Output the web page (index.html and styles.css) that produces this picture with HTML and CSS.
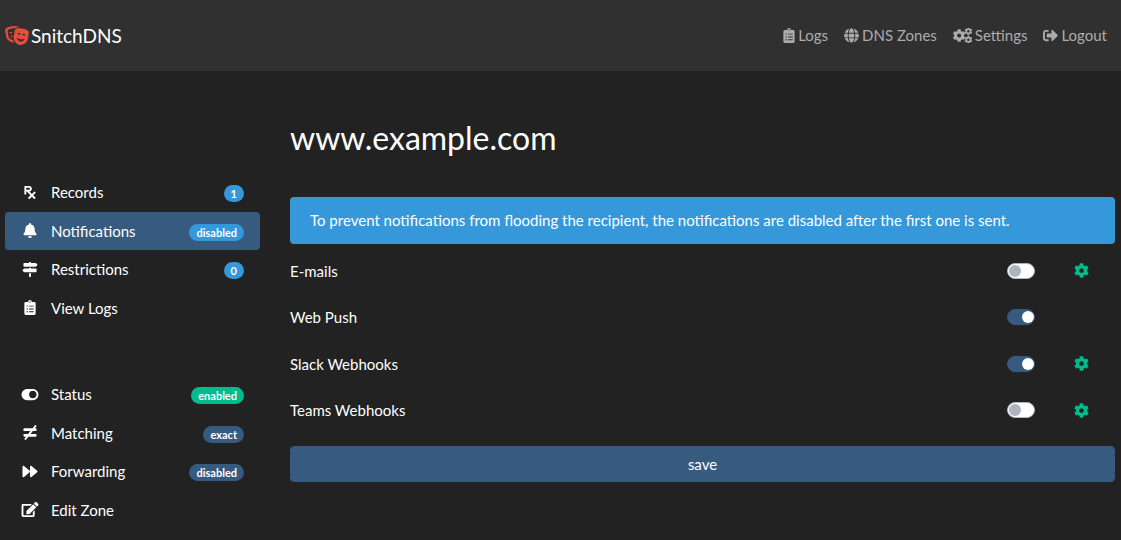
FILE: index.html
```html
<!DOCTYPE html>
<html lang="en">
<head>
<meta charset="utf-8">
<meta name="viewport" content="width=device-width, initial-scale=1">
<title>SnitchDNS</title>
<link rel="stylesheet" href="styles.css">
</head>
<body>
<svg class="sprite" aria-hidden="true">
  <symbol id="masks" viewBox="0 0 640 512"><path d="M206.86 245.15c-35.88 10.45-59.95 41.2-57.53 74.1 11.4-12.72 28.81-23.7 49.9-30.92l7.63-43.18zM95.81 295L64.08 115.49c-.29-1.62.28-2.62.24-2.65 57.76-32.06 123.12-49.01 189.01-49.01 1.61 0 3.23.17 4.85.19 13.95-13.47 31.73-22.83 51.59-26 18.89-3.02 38.05-4.55 57.18-5.32-9.99-13.95-24.48-24.23-41.77-27C301.27 1.89 277.24 0 253.32 0 176.66 0 101.02 19.42 33.2 57.06 9.03 70.48-3.92 98.48 1.05 126.58l31.73 179.51c14.23 80.52 136.33 142.08 204.45 142.08 3.59 0 6.75-.46 10.01-.8-13.52-17.08-28.94-40.48-39.5-67.58-47.61-12.98-106.06-51.62-111.93-84.79zm97.55-137.46c-.73-4.12-2.23-7.87-4.07-11.4-8.25 8.91-20.67 15.75-35.32 18.32-14.65 2.58-28.67.4-39.48-5.17-.52 3.94-.64 7.98.09 12.1 3.84 21.7 24.58 36.19 46.34 32.37 21.75-3.82 36.28-24.52 32.44-46.22zM606.8 120.9c-88.98-49.38-191.43-67.41-291.98-51.35-27.31 4.36-49.08 26.26-54.04 54.36l-31.73 179.51c-15.39 87.05 95.28 196.27 158.31 207.35 63.03 11.09 204.47-53.79 219.86-140.84l31.73-179.51c4.97-28.11-7.98-56.11-32.15-69.52zm-273.24 96.8c3.84-21.7 24.58-36.19 46.34-32.36 21.76 3.83 36.28 24.52 32.45 46.22-.73 4.12-2.23 7.87-4.07 11.4-8.25-8.91-20.67-15.75-35.32-18.32-14.65-2.58-28.67-.4-39.48 5.17-.53-3.95-.65-7.99.08-12.11zm70.47 198.76c-55.68-9.79-93.52-59.27-89.04-112.9 20.6 25.54 56.21 46.17 99.49 53.78 43.28 7.61 83.82.37 111.93-16.6-14.18 51.94-66.71 85.51-122.38 75.72zm130.3-151.34c-8.25-8.91-20.68-15.75-35.33-18.32-14.65-2.58-28.67-.4-39.48 5.17-.52-3.94-.64-7.98.09-12.1 3.84-21.7 24.58-36.19 46.34-32.37 21.75 3.83 36.28 24.52 32.45 46.22-.73 4.13-2.23 7.88-4.07 11.4z"/></symbol>
  <symbol id="clipboard" viewBox="0 0 384 512"><path d="M336 64h-80c0-35.3-28.7-64-64-64s-64 28.7-64 64H48C21.5 64 0 85.5 0 112v352c0 26.5 21.5 48 48 48h288c26.5 0 48-21.5 48-48V112c0-26.5-21.5-48-48-48zM96 424c-13.3 0-24-10.7-24-24s10.7-24 24-24 24 10.7 24 24-10.7 24-24 24zm0-96c-13.3 0-24-10.7-24-24s10.7-24 24-24 24 10.7 24 24-10.7 24-24 24zm0-96c-13.3 0-24-10.7-24-24s10.7-24 24-24 24 10.7 24 24-10.7 24-24 24zm96-192c13.3 0 24 10.7 24 24s-10.7 24-24 24-24-10.7-24-24 10.7-24 24-24zm128 368c0 4.4-3.6 8-8 8H168c-4.4 0-8-3.6-8-8v-16c0-4.4 3.6-8 8-8h144c4.4 0 8 3.6 8 8v16zm0-96c0 4.4-3.6 8-8 8H168c-4.4 0-8-3.6-8-8v-16c0-4.4 3.6-8 8-8h144c4.4 0 8 3.6 8 8v16zm0-96c0 4.4-3.6 8-8 8H168c-4.4 0-8-3.6-8-8v-16c0-4.4 3.6-8 8-8h144c4.4 0 8 3.6 8 8v16z"/></symbol>
  <symbol id="globe" viewBox="0 0 496 512"><path d="M336.5 160C322 70.7 287.8 8 248 8s-74 62.7-88.5 152h177zM152 256c0 22.2 1.2 43.5 3.3 64h185.3c2.1-20.5 3.3-41.8 3.3-64s-1.2-43.5-3.3-64H155.3c-2.1 20.5-3.3 41.8-3.3 64zm324.7-96c-28.6-67.9-86.5-120.4-158-141.6 24.4 33.8 41.2 84.7 50 141.6h108zM177.2 18.4C105.8 39.6 47.8 92.1 19.3 160h108c8.7-56.9 25.5-107.8 49.9-141.6zM487.4 192H372.7c2.1 21 3.3 42.5 3.3 64s-1.2 43-3.3 64h114.6c5.5-20.5 8.6-41.8 8.6-64s-3.1-43.5-8.5-64zM120 256c0-21.5 1.2-43 3.3-64H8.6C3.2 212.5 0 233.8 0 256s3.2 43.5 8.6 64h114.6c-2-21-3.2-42.5-3.2-64zm39.5 96c14.5 89.3 48.7 152 88.5 152s74-62.7 88.5-152h-177zm159.3 141.6c71.4-21.2 129.4-73.7 158-141.6h-108c-8.8 56.9-25.6 107.8-50 141.6zM19.3 352c28.6 67.9 86.5 120.4 158 141.6-24.4-33.8-41.2-84.7-50-141.6h-108z"/></symbol>
  <symbol id="cog" viewBox="0 0 512 512"><path id="cog-shape" d="M487.4 315.7l-42.6-24.6c4.3-23.2 4.3-47 0-70.2l42.6-24.6c4.9-2.8 7.1-8.6 5.5-14-11.1-35.6-30-67.8-54.7-94.6-3.8-4.1-10-5.1-14.8-2.3L380.8 110c-17.9-15.4-38.5-27.3-60.8-35.1V25.8c0-5.6-3.9-10.5-9.4-11.7-36.7-8.2-74.3-7.8-109.2 0-5.5 1.2-9.4 6.1-9.4 11.7V75c-22.2 7.9-42.8 19.8-60.8 35.1L88.7 85.5c-4.9-2.8-11-1.9-14.8 2.3-24.7 26.7-43.6 58.9-54.7 94.6-1.7 5.4.6 11.2 5.5 14L67.3 221c-4.3 23.2-4.3 47 0 70.2l-42.6 24.6c-4.9 2.8-7.1 8.6-5.5 14 11.1 35.6 30 67.8 54.7 94.6 3.8 4.1 10 5.1 14.8 2.3l42.6-24.6c17.9 15.4 38.5 27.3 60.8 35.1v49.2c0 5.6 3.9 10.5 9.4 11.7 36.7 8.2 74.3 7.8 109.2 0 5.5-1.2 9.4-6.1 9.4-11.7v-49.2c22.2-7.9 42.8-19.8 60.8-35.1l42.6 24.6c4.9 2.8 11 1.9 14.8-2.3 24.7-26.7 43.6-58.9 54.7-94.6 1.5-5.5-.7-11.3-5.6-14.1zM256 336c-44.1 0-80-35.9-80-80s35.9-80 80-80 80 35.9 80 80-35.9 80-80 80z"/></symbol>
  <symbol id="cogs" viewBox="0 0 640 512">
    <use href="#cog-shape" transform="translate(-18 34) scale(.87)"/>
    <use href="#cog-shape" transform="translate(384 -26) scale(.54)"/>
    <use href="#cog-shape" transform="translate(384 262) scale(.54)"/>
  </symbol>
  <symbol id="sign-out" viewBox="0 0 512 512"><path d="M497 273L329 441c-15 15-41 4.5-41-17v-96H152c-13.3 0-24-10.7-24-24v-96c0-13.3 10.7-24 24-24h136V88c0-21.4 25.9-32 41-17l168 168c9.3 9.4 9.3 24.6 0 34zM192 436v-40c0-6.6-5.4-12-12-12H96c-17.7 0-32-14.3-32-32V160c0-17.7 14.3-32 32-32h84c6.6 0 12-5.4 12-12V76c0-6.6-5.4-12-12-12H96c-53 0-96 43-96 96v192c0 53 43 96 96 96h84c6.6 0 12-5.4 12-12z"/></symbol>
  <symbol id="rx" viewBox="0 0 384 512"><path d="M301.26 352l78.06-78.06c6.25-6.25 6.25-16.38 0-22.63l-22.63-22.63c-6.25-6.25-16.38-6.25-22.63 0L256 306.74l-83.96-83.96C219.31 216.8 256 176.89 256 128c0-53.02-42.98-96-96-96H16C7.16 32 0 39.16 0 48v256c0 8.84 7.16 16 16 16h32c8.84 0 16-7.16 16-16v-80h18.75l128 128-78.06 78.06c-6.25 6.25-6.25 16.38 0 22.63l22.63 22.63c6.25 6.25 16.38 6.25 22.63 0L256 397.25l78.06 78.06c6.25 6.25 16.38 6.25 22.63 0l22.63-22.63c6.25-6.25 6.25-16.38 0-22.63L301.26 352zM64 96h96c17.64 0 32 14.36 32 32s-14.36 32-32 32H64V96z"/></symbol>
  <symbol id="bell" viewBox="0 0 448 512"><path d="M224 512c35.32 0 63.97-28.65 63.97-64H160.03c0 35.35 28.65 64 63.97 64zm215.39-149.71c-19.32-20.76-55.47-51.99-55.47-154.29 0-77.7-54.48-139.9-127.94-155.16V32c0-17.67-14.32-32-31.98-32s-31.98 14.33-31.98 32v20.84C118.56 68.1 64.08 130.3 64.08 208c0 102.3-36.15 133.53-55.47 154.29-6 6.45-8.66 14.16-8.61 21.71.11 16.4 12.98 32 32.1 32h383.8c19.12 0 32-15.6 32.1-32 .05-7.55-2.61-15.27-8.61-21.71z"/></symbol>
  <symbol id="signs" viewBox="0 0 512 512"><path d="M507.31 84.69L464 41.37c-6-6-14.14-9.37-22.63-9.37H288V16c0-8.84-7.16-16-16-16h-32c-8.84 0-16 7.16-16 16v16H56c-13.25 0-24 10.75-24 24v80c0 13.25 10.75 24 24 24h385.37c8.49 0 16.62-3.37 22.63-9.37l43.31-43.31c6.25-6.26 6.25-16.38 0-22.63zM224 496c0 8.84 7.16 16 16 16h32c8.84 0 16-7.16 16-16V384h-64v112zm232-272H288v-32h-64v32H70.63c-8.49 0-16.62 3.37-22.63 9.37L4.69 276.69c-6.25 6.25-6.25 16.38 0 22.63L48 342.63c6 6 14.14 9.37 22.63 9.37H456c13.25 0 24-10.75 24-24v-80c0-13.25-10.75-24-24-24z"/></symbol>
  <symbol id="toggle" viewBox="0 0 576 512"><path d="M384 64H192C86 64 0 150 0 256s86 192 192 192h192c106 0 192-86 192-192S490 64 384 64zm0 320c-70.8 0-128-57.3-128-128 0-70.8 57.3-128 128-128 70.8 0 128 57.3 128 128 0 70.8-57.3 128-128 128z"/></symbol>
  <symbol id="not-equal" viewBox="0 0 448 512"><path d="M416 208c17.67 0 32-14.33 32-32v-32c0-17.67-14.33-32-32-32h-23.88l51.87-66.81c5.37-7.02 4.04-17.06-2.97-22.43L415.61 3.3c-7.02-5.38-17.06-4.04-22.44 2.97L311.09 112H32c-17.67 0-32 14.33-32 32v32c0 17.67 14.33 32 32 32h204.56l-74.53 96H32c-17.67 0-32 14.33-32 32v32c0 17.67 14.33 32 32 32h55.49l-51.87 66.81c-5.37 7.01-4.04 17.05 2.97 22.43L64 508.7c7.02 5.38 17.06 4.04 22.43-2.97L168.52 400H416c17.67 0 32-14.33 32-32v-32c0-17.67-14.33-32-32-32H243.05l74.53-96H416z"/></symbol>
  <symbol id="forward" viewBox="0 0 512 512"><path d="M500.5 231.4l-192-160C287.9 54.3 256 68.6 256 96v320c0 27.4 31.9 41.8 52.5 24.6l192-160c15.3-12.8 15.3-36.4 0-49.2zm-256 0l-192-160C31.9 54.3 0 68.6 0 96v320c0 27.4 31.9 41.8 52.5 24.6l192-160c15.3-12.8 15.3-36.4 0-49.2z"/></symbol>
  <symbol id="edit" viewBox="0 0 576 512"><path d="M402.6 83.2l90.2 90.2c3.8 3.8 3.8 10 0 13.8L274.4 405.6l-92.8 10.3c-12.4 1.4-22.9-9.1-21.5-21.5l10.3-92.8L388.8 83.2c3.8-3.8 10-3.8 13.8 0zm162-22.9l-48.8-48.8c-15.2-15.2-39.9-15.2-55.2 0l-35.4 35.4c-3.8 3.8-3.8 10 0 13.8l90.2 90.2c3.8 3.8 10 3.8 13.8 0l35.4-35.4c15.2-15.3 15.2-40 0-55.2zM384 346.2V448H64V128h229.8c3.2 0 6.2-1.3 8.5-3.5l40-40c7.6-7.6 2.2-20.5-8.5-20.5H48C21.5 64 0 85.5 0 112v352c0 26.5 21.5 48 48 48h352c26.5 0 48-21.5 48-48V306.2c0-10.7-12.9-16-20.5-8.5l-40 40c-2.2 2.3-3.5 5.3-3.5 8.5z"/></symbol>
</svg>

<header class="navbar">
  <a class="brand" href="#"><svg class="brand-icon" aria-hidden="true"><use href="#masks"/></svg>SnitchDNS</a>
  <nav class="top-nav" aria-label="Main">
    <a class="top-link" href="#"><svg class="icon narrow" aria-hidden="true"><use href="#clipboard"/></svg>Logs</a>
    <a class="top-link" href="#"><svg class="icon" aria-hidden="true"><use href="#globe"/></svg>DNS Zones</a>
    <a class="top-link" href="#"><svg class="icon wide" aria-hidden="true"><use href="#cogs"/></svg>Settings</a>
    <a class="top-link" href="#"><svg class="icon" aria-hidden="true"><use href="#sign-out"/></svg>Logout</a>
  </nav>
</header>

<div class="layout">
  <aside class="sidebar">
    <nav class="side-nav" aria-label="Zone">
      <a class="side-link" href="#"><svg class="side-icon" aria-hidden="true"><use href="#rx"/></svg><span class="side-text">Records</span><span class="badge info">1</span></a>
      <a class="side-link active" href="#" aria-current="page"><svg class="side-icon" aria-hidden="true"><use href="#bell"/></svg><span class="side-text">Notifications</span><span class="badge info">disabled</span></a>
      <a class="side-link" href="#"><svg class="side-icon" aria-hidden="true"><use href="#signs"/></svg><span class="side-text">Restrictions</span><span class="badge info">0</span></a>
      <a class="side-link" href="#"><svg class="side-icon" aria-hidden="true"><use href="#clipboard"/></svg><span class="side-text">View Logs</span></a>
    </nav>
    <nav class="side-nav" aria-label="Zone settings">
      <a class="side-link" href="#"><svg class="side-icon" aria-hidden="true"><use href="#toggle"/></svg><span class="side-text">Status</span><span class="badge success">enabled</span></a>
      <a class="side-link" href="#"><svg class="side-icon" aria-hidden="true"><use href="#not-equal"/></svg><span class="side-text">Matching</span><span class="badge primary">exact</span></a>
      <a class="side-link" href="#"><svg class="side-icon" aria-hidden="true"><use href="#forward"/></svg><span class="side-text">Forwarding</span><span class="badge primary">disabled</span></a>
      <a class="side-link" href="#"><svg class="side-icon" aria-hidden="true"><use href="#edit"/></svg><span class="side-text">Edit Zone</span></a>
    </nav>
  </aside>

  <main class="content">
    <h1 class="title">www.example.com</h1>
    <div class="alert" role="status">To prevent notifications from flooding the recipient, the notifications are disabled after the first one is sent.</div>
    <form class="settings">
      <div class="row">
        <label class="row-label" for="email">E-mails</label>
        <input class="switch" type="checkbox" role="switch" id="email">
        <a class="gear" href="#" aria-label="E-mail settings"><svg class="icon" aria-hidden="true"><use href="#cog"/></svg></a>
      </div>
      <div class="row">
        <label class="row-label" for="push">Web Push</label>
        <input class="switch" type="checkbox" role="switch" id="push" checked>
      </div>
      <div class="row">
        <label class="row-label" for="slack">Slack Webhooks</label>
        <input class="switch" type="checkbox" role="switch" id="slack" checked>
        <a class="gear" href="#" aria-label="Slack settings"><svg class="icon" aria-hidden="true"><use href="#cog"/></svg></a>
      </div>
      <div class="row">
        <label class="row-label" for="teams">Teams Webhooks</label>
        <input class="switch" type="checkbox" role="switch" id="teams">
        <a class="gear" href="#" aria-label="Teams settings"><svg class="icon" aria-hidden="true"><use href="#cog"/></svg></a>
      </div>
      <button class="save" type="submit">save</button>
    </form>
  </main>
</div>
</body>
</html>
```

FILE: styles.css
```css
* {
  box-sizing: border-box;
}

body {
  margin: 0;
  background: #222;
  color: #fff;
  font-family: Lato, "Liberation Sans", sans-serif;
  font-size: 15px;
  line-height: 1.5;
}

a {
  color: inherit;
  text-decoration: none;
}

svg {
  display: block;
  flex: none;
  fill: currentColor;
}

.sprite {
  position: absolute;
  width: 0;
  height: 0;
}

.icon {
  width: 15px;
  height: 15px;
}

.icon.narrow {
  width: 12px;
}

.icon.wide {
  width: 19px;
}

/* Top bar */

.navbar {
  display: flex;
  align-items: center;
  justify-content: space-between;
  padding: 16px 14px 16px 5px;
  background: #303030;
}

.brand {
  display: flex;
  align-items: center;
  gap: 2px;
  font-size: 19px;
  line-height: 39px;
}

.brand-icon {
  width: 24px;
  height: 19px;
  color: #e74c3c;
}

.top-nav {
  display: flex;
  gap: 16px;
  color: #acacac;
}

.top-link {
  display: flex;
  align-items: center;
  gap: 3px;
}

/* Page columns */

.layout {
  display: grid;
  grid-template-columns: 255px minmax(0, 1fr);
  gap: 30px;
  padding: 48px 6px 12px 5px;
}

.sidebar {
  display: flex;
  flex-direction: column;
  gap: 48px;
  padding-top: 54px;
}

.side-link {
  display: flex;
  align-items: baseline;
  gap: 12px;
  padding: 8px 16px;
  border-radius: 4px;
}

.side-link.active {
  background: #375a7f;
}

.side-icon {
  align-self: center;
  width: 18px;
  height: 15px;
}

.side-text {
  flex: 1;
}

.badge {
  padding: 3px 7px;
  border-radius: 10px;
  font-size: 11px;
  font-weight: 700;
  line-height: 11px;
}

.info {
  background: #3498db;
}

.success {
  background: #00bc8c;
}

.primary {
  background: #375a7f;
}

/* Main column */

.title {
  margin: 0 0 40px;
  font-size: 32px;
  font-weight: 400;
  line-height: 38px;
}

.alert {
  margin: 0 0 4px;
  padding: 12px 20px;
  border-radius: 4px;
  background: #3498db;
}

.row {
  display: grid;
  grid-template-columns: minmax(0, 1fr) 28px 68px;
  column-gap: 12px;
  align-items: center;
  padding: 12px 0;
}

.switch {
  appearance: none;
  display: flex;
  align-items: center;
  width: 28px;
  height: 16px;
  margin: 0;
  padding: 1px 0 1px 1px;
  border: 1px solid #adb5bd;
  border-radius: 8px;
  background: #fff;
}

.switch::before {
  content: "";
  width: 12px;
  height: 12px;
  border-radius: 50%;
  background: #adb5bd;
}

.switch:checked {
  justify-content: flex-end;
  border-color: #375a7f;
  background: #375a7f;
}

.switch:checked::before {
  background: #fff;
}

.gear {
  justify-self: center;
  color: #00bc8c;
}

.save {
  display: block;
  width: 100%;
  margin: 12px 0 0;
  padding: 6px 12px;
  border: 1px solid #375a7f;
  border-radius: 4px;
  background: #375a7f;
  color: #fff;
  font: inherit;
}
```
